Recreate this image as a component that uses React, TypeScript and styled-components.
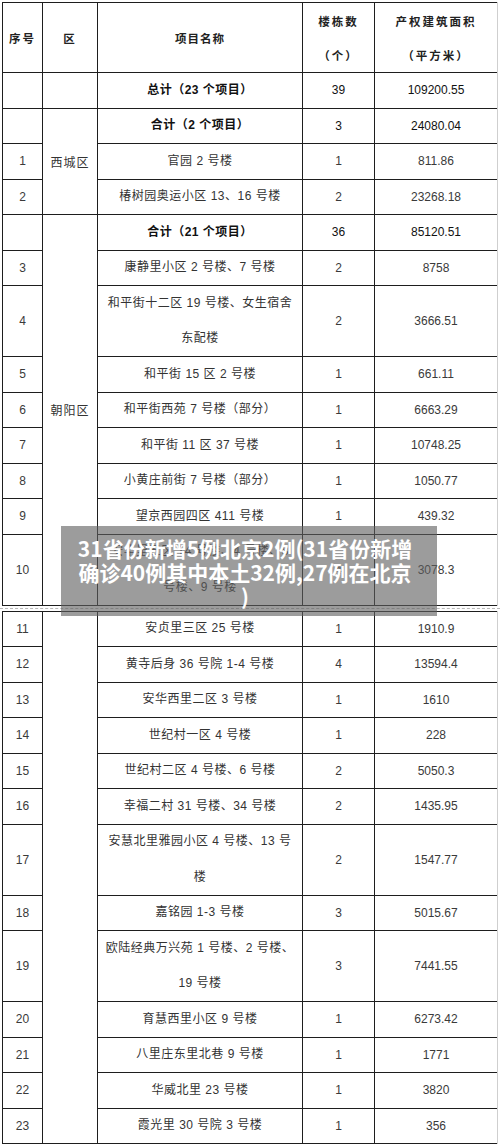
import React from "react"
import styled, { createGlobalStyle } from "styled-components"

const GlobalStyle = createGlobalStyle`
  html, body {
    margin: 0;
    padding: 0;
    background: #ffffff;
  }
`

const UNIT = 35.5 // one-line row pitch, line included
const LINE = "#1e1e1e"

interface District {
  label: string
  span: number
}

interface RowData {
  no?: string
  name: string[]
  count: string
  area: string
  bold?: boolean
  district?: District // set only on the row where the merged cell starts
}

const topRows: RowData[] = [
  { name: ["总计（23 个项目）"], count: "39", area: "109200.55", bold: true, district: { label: "", span: 1 } },
  { name: ["合计（2 个项目）"], count: "3", area: "24080.04", bold: true, district: { label: "西城区", span: 3 } },
  { no: "1", name: ["官园 2 号楼"], count: "1", area: "811.86" },
  { no: "2", name: ["椿树园奥运小区 13、16 号楼"], count: "2", area: "23268.18" },
  { name: ["合计（21 个项目）"], count: "36", area: "85120.51", bold: true, district: { label: "朝阳区", span: 9 } },
  { no: "3", name: ["康静里小区 2 号楼、7 号楼"], count: "2", area: "8758" },
  { no: "4", name: ["和平街十二区 19 号楼、女生宿舍", "东配楼"], count: "2", area: "3666.51" },
  { no: "5", name: ["和平街 15 区 2 号楼"], count: "1", area: "661.11" },
  { no: "6", name: ["和平街西苑 7 号楼（部分）"], count: "1", area: "6663.29" },
  { no: "7", name: ["和平街 11 区 37 号楼"], count: "1", area: "10748.25" },
  { no: "8", name: ["小黄庄前街 7 号楼（部分）"], count: "1", area: "1050.77" },
  { no: "9", name: ["望京西园四区 411 号楼"], count: "1", area: "439.32" },
  { no: "10", name: ["安华里五区 14 号楼、4 号楼、8", "号楼、9 号楼"], count: "4", area: "3078.3" },
]

const bottomRows: RowData[] = [
  { no: "11", name: ["安贞里三区 25 号楼"], count: "1", area: "1910.9", district: { label: "", span: 13 } },
  { no: "12", name: ["黄寺后身 36 号院 1-4 号楼"], count: "4", area: "13594.4" },
  { no: "13", name: ["安华西里二区 3 号楼"], count: "1", area: "1610" },
  { no: "14", name: ["世纪村一区 4 号楼"], count: "1", area: "228" },
  { no: "15", name: ["世纪村二区 4 号楼、6 号楼"], count: "2", area: "5050.3" },
  { no: "16", name: ["幸福二村 31 号楼、34 号楼"], count: "2", area: "1435.95" },
  { no: "17", name: ["安慧北里雅园小区 4 号楼、13 号", "楼"], count: "2", area: "1547.77" },
  { no: "18", name: ["嘉铭园 1-3 号楼"], count: "3", area: "5015.67" },
  { no: "19", name: ["欧陆经典万兴苑 1 号楼、2 号楼、", "19 号楼"], count: "3", area: "7441.55" },
  { no: "20", name: ["育慧西里小区 9 号楼"], count: "1", area: "6273.42" },
  { no: "21", name: ["八里庄东里北巷 9 号楼"], count: "1", area: "1771" },
  { no: "22", name: ["华威北里 23 号楼"], count: "1", area: "3820" },
  { no: "23", name: ["霞光里 30 号院 3 号楼"], count: "1", area: "356" },
]

// row track sizes between the 1px lines
const rowTracks = (rows: RowData[], withHeader?: boolean): string =>
  [withHeader ? "69px" : "", ...rows.map((r) => `${r.name.length * UNIT - 1}px`)].filter(Boolean).join(" ")

const TableBlock = ({ rows, withHeader }: { rows: RowData[]; withHeader?: boolean }): JSX.Element => (
  <Grid $rows={rowTracks(rows, withHeader)}>
    {withHeader && (
      <>
        <HeadCell>序号</HeadCell>
        <HeadCell>区</HeadCell>
        <HeadCell $narrow>项目名称</HeadCell>
        <HeadCell>
          楼栋数
          <br />
          （个）
        </HeadCell>
        <HeadCell>
          产权建筑面积
          <br />
          （平方米）
        </HeadCell>
      </>
    )}
    {rows.map((row, i) => (
      <React.Fragment key={i}>
        <NumCell>{row.no ?? ""}</NumCell>
        {row.district && <DistrictCell $span={row.district.span}>{row.district.label}</DistrictCell>}
        <NameCell $bold={row.bold}>
          {row.name.map((line, j) => (
            <NameLine key={j}>{line}</NameLine>
          ))}
        </NameCell>
        <NumCell $bold={row.bold}>{row.count}</NumCell>
        <NumCell $bold={row.bold}>{row.area}</NumCell>
      </React.Fragment>
    ))}
  </Grid>
)

const App = (): JSX.Element => (
  <>
    <GlobalStyle />
    <Page>
      <TableBlock rows={topRows} withHeader />
      <Seam />
      <TableBlock rows={bottomRows} />
      <Caption>
        31省份新增5例北京2例(31省份新增
        <br />
        确诊40例其中本土32例,27例在北京
        <br />)
      </Caption>
    </Page>
  </>
)

const Page = styled.div`
  position: relative;
  width: 500px;
  height: 1144px;
  overflow: hidden;
  box-sizing: border-box;
  padding: 2px 2px 0 2px;
  font-family: "Liberation Sans", "Noto Sans CJK SC", sans-serif;
  color: #333;
`

const Grid = styled.div<{ $rows: string }>`
  display: grid;
  width: 496px;
  box-sizing: border-box;
  grid-template-columns: 39px 54px 204px 71px 122px;
  grid-template-rows: ${(p) => p.$rows};
  gap: 1px;
  padding: 1px 0 1px 1px;
  border-right: 1px solid #cfcfcf;
  background: ${LINE};
`

const Cell = styled.div`
  display: flex;
  flex-direction: column;
  align-items: center;
  justify-content: center;
  background: #ffffff;
  text-align: center;
  overflow: hidden;
`

const HeadCell = styled(Cell)<{ $narrow?: boolean }>`
  font-family: "Noto Sans CJK SC", sans-serif;
  font-weight: 700;
  font-size: 11.5px;
  line-height: 34px;
  letter-spacing: ${(p) => (p.$narrow ? "1px" : "2px")};
  color: #222;
`

const NumCell = styled(Cell)<{ $bold?: boolean }>`
  font-family: "Liberation Sans", sans-serif;
  font-size: 12px;
  font-weight: ${(p) => (p.$bold ? 500 : 400)};
  color: ${(p) => (p.$bold ? "#111" : "#3a3a3a")};
`

const DistrictCell = styled(Cell)<{ $span: number }>`
  grid-row: span ${(p) => p.$span};
  font-family: "Noto Sans CJK SC", sans-serif;
  font-size: 12px;
  letter-spacing: 1px;
  color: #333;
`

const NameCell = styled(Cell)<{ $bold?: boolean }>`
  font-family: "Liberation Sans", "Noto Sans CJK SC", sans-serif;
  font-size: 12px;
  letter-spacing: 0.5px;
  font-weight: ${(p) => (p.$bold ? 700 : 400)};
  color: ${(p) => (p.$bold ? "#111" : "#333")};
`

const NameLine = styled.div`
  line-height: ${UNIT}px;
  white-space: nowrap;
`

const Seam = styled.div`
  height: 5px;
  margin: 0 -2px;
  box-sizing: border-box;
  padding-top: 2px;
  &::before {
    content: "";
    display: block;
    border-top: 1px dashed #b8b8b8;
  }
`

const Caption = styled.div`
  position: absolute;
  left: 61px;
  top: 526px;
  width: 376px;
  height: 90px;
  box-sizing: border-box;
  padding: 10px 8px 0 0;
  background: rgba(95, 95, 95, 0.62);
  color: #ffffff;
  font-family: "Noto Sans CJK SC", sans-serif;
  font-weight: 700;
  font-size: 21px;
  line-height: 24px;
  text-align: center;
  white-space: nowrap;
`

export default App
